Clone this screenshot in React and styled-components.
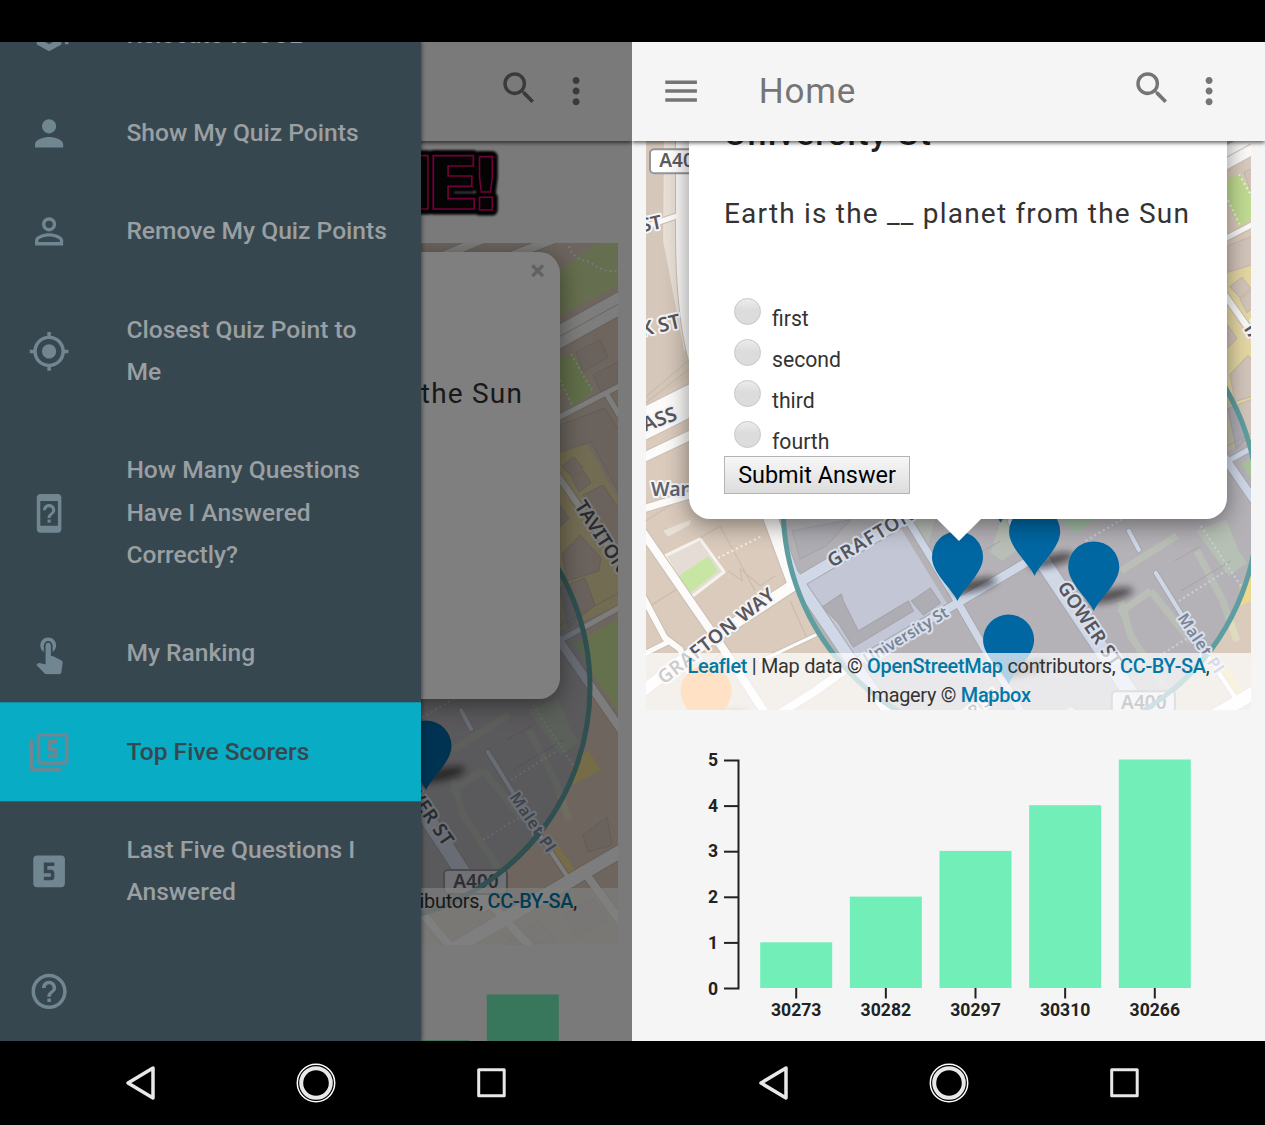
import React from "react";
import styled, { createGlobalStyle, css } from "styled-components";
import {
  MdSchool, MdPerson, MdPersonOutline, MdMyLocation, MdDeviceUnknown, MdTouchApp,
  MdFilter5, MdLooks5, MdHelpOutline, MdSearch, MdMoreVert, MdMenu,
} from "react-icons/md";

const Global = createGlobalStyle`
  * { box-sizing: border-box; }
  body { margin: 0; background: #000; font-family: Roboto, "Liberation Sans", sans-serif; }
`;

const Page = styled.main`
  width: 1265px;
  height: 1125px;
  padding-top: 42px;
  display: grid;
  grid-template-columns: 632px 633px;
  background: #000;
  overflow: hidden;
`;
const Phone = styled.section`
  display: flex;
  flex-direction: column;
  min-width: 0;
`;
const Screen = styled.div`
  position: relative;
  height: 999px;
  background: #f5f5f5;
  overflow: hidden;
  display: flex;
  flex-direction: column;
`;
const AppBar = styled.header`
  position: relative;
  z-index: 2;
  flex: none;
  height: 99px;
  padding: 0 35px 0 28px;
  display: flex;
  align-items: center;
  color: #757575;
  background: #f5f5f5;
  box-shadow: 0 2px 4px rgba(0, 0, 0, 0.6);
  svg { display: block; width: 42.2px; height: 42.2px; }
`;
const Title = styled.h1`
  flex: 1;
  margin: 0 0 0 56.5px;
  font-size: 35px;
  font-weight: 400;
  letter-spacing: 0.8px;
`;
const SearchButton = styled.span`
  margin: 0 14.8px 7px 0;
`;
const Body = styled.div`
  flex: none;
  display: flex;
  flex-direction: column;
  transform: translateY(${(p) => -p.$scrolled}px);
`;
const Banner = styled.div`
  height: 102px;
  display: flex;
  justify-content: flex-end;
  svg { margin-right: 113px; display: block; }
`;
const MapFrame = styled.div`
  position: relative;
  height: 702px;
  margin: 0 14px;
  overflow: hidden;
  & > svg { display: block; width: 100%; height: 100%; }
`;
const Attribution = styled.div`
  position: absolute;
  left: 0;
  right: 0;
  bottom: 0;
  height: 57px;
  background: rgba(255, 255, 255, 0.7);
  color: #333;
  font-size: 19.9px;
  letter-spacing: -0.28px;
  line-height: 28.5px;
  text-align: center;
  white-space: nowrap;
  b { color: #0078a8; font-weight: 500; }
`;
const PopupBox = styled.div`
  position: absolute;
  left: ${(p) => 8 + p.$pan[0]}px;
  top: ${(p) => 9 + p.$pan[1]}px;
  width: 538px;
  height: 447px;
  padding: 41px 35px 0;
  border-radius: 21px;
  background: #fff;
  color: #333;
  box-shadow: 0 5px 25px rgba(0, 0, 0, 0.45);
  &::after {
    content: "";
    position: absolute;
    left: 247px;
    top: 446px;
    border: 23px solid transparent;
    border-top-color: #fff;
    border-bottom: 0;
  }
`;
const Close = styled.span`
  position: absolute;
  right: 15px;
  top: 4px;
  font: bold 28px/30px Roboto, sans-serif;
  color: #c3c3c3;
`;
const PopupTitle = styled.h3`
  margin: 0;
  font-size: 34px;
  line-height: 40px;
  font-weight: 500;
  letter-spacing: 1.3px;
  color: #222;
`;
const Question = styled.p`
  margin: 41px 0 57px;
  font-size: 28px;
  line-height: 40px;
  letter-spacing: 1.2px;
  white-space: nowrap;
`;
const Choice = styled.label`
  height: 41px;
  padding-left: 9.5px;
  display: flex;
  align-items: center;
  gap: 11.5px;
  font-size: 21.2px;
`;
const Dot = styled.i`
  width: 27px;
  height: 27px;
  border: 1px solid #c6c6c6;
  border-radius: 50%;
  background: linear-gradient(#ececec, #dcdcdc 45%);
`;
const ChoiceText = styled.span`
  padding-top: 13.4px;
`;
const Submit = styled.button`
  display: block;
  width: 186px;
  height: 38px;
  margin: 1px 0 0;
  padding: 0;
  border: 1px solid #b4b4b4;
  background: linear-gradient(#f7f7f7, #dcdcdc);
  color: #000;
  font: 400 23.4px Roboto, sans-serif;
  white-space: nowrap;
`;
const ChartBox = styled.div`
  height: 331px;
  svg { display: block; }
  text { font: 700 17.6px Roboto, sans-serif; fill: #222; }
`;
const Scrim = styled.div`
  position: absolute;
  inset: 0;
  z-index: 3;
  background: rgba(0, 0, 0, 0.5);
`;
const Drawer = styled.nav`
  position: absolute;
  z-index: 4;
  left: 0;
  top: 0;
  width: 421px;
  height: 100%;
  overflow: hidden;
  background: #37474f;
  box-shadow: 1px 0 4px rgba(0, 0, 0, 0.45);
`;
const DrawerList = styled.div`
  display: flex;
  flex-direction: column;
  transform: translateY(-56.7px);
`;
const Item = styled.a`
  display: flex;
  align-items: center;
  gap: 56.2px;
  padding: 28.2px 26px 28.2px 28px;
  min-height: 98.4px;
  font-size: 24.6px;
  font-weight: 500;
  line-height: 42.1px;
  color: #999fa2;
  svg { flex: none; width: 42.2px; height: 42.2px; color: #708691; }
  &:first-child { padding-top: 28.6px; padding-bottom: 27.8px; }
  ${(p) => p.$active && css`
    background: #08acc4;
    color: #37474f;
    svg { color: #738590; }
  `}
`;
const NavBar = styled.footer`
  height: 84px;
  display: flex;
  justify-content: center;
  align-items: center;
  svg { display: block; }
`;

const MENU = [
  [MdSchool, "Relocate to UCL"],
  [MdPerson, "Show My Quiz Points"],
  [MdPersonOutline, "Remove My Quiz Points"],
  [MdMyLocation, "Closest Quiz Point to Me"],
  [MdDeviceUnknown, "How Many Questions Have I Answered Correctly?"],
  [MdTouchApp, "My Ranking"],
  [MdFilter5, "Top Five Scorers", true],
  [MdLooks5, "Last Five Questions I Answered"],
  [MdHelpOutline, ""],
];

const SCORES = [["30273", 1], ["30282", 2], ["30297", 3], ["30310", 4], ["30266", 5]];

function Pin({ x, y, color = "#0067a3" }) {
  return (
    <g transform={`translate(${x} ${y})`}>
      <ellipse cx="20" cy="-11" rx="23" ry="6" transform="rotate(-14)" fill="#111" opacity=".6" filter="url(#soft)" />
      <path d="M0 0 C-6 -13 -25.500 -28 -25.500 -44 A25.500 25.500 0 0 1 25.500 -44 C25.500 -28 6 -13 0 0Z" fill={color} />
    </g>
  );
}

const ROADS = [
  ["M684 120 L684 240 Q685 330 702 375", 16],
  ["M646 226 L690 211", 5],
  ["M630 430 L700 395", 30],
  ["M630 463 L700 430", 9],
  ["M630 512 L720 485", 7],
  ["M635 520 L728 655 L765 712", 8],
  ["M640 590 L665 637 L680 648 L705 712", 6],
  ["M640 655 L668 641", 5],
  ["M630 700 L700 645 L795 583 L905 518 L960 480", 11],
  ["M764 500 L794 582", 14],
  ["M794 575 L850 658 L895 720", 11],
  ["M780 712 L815 690 L850 665 L1035 556", 8],
  ["M760 660 L815 634", 3],
  ["M896 500 L952 592 L1020 710", 7],
  ["M1015 520 L1055 580 L1112 665 L1150 724", 15],
  ["M1128 530 L1138 549 M1155 572 L1200 645 L1240 705", 4],
  ["M1100 80 L1160 55 M1180 75 L1245 50", 8],
  ["M1215 163 L1300 116", 21],
  ["M1215 243 L1300 199 M1273 213 L1295 250", 5],
  ["M1215 282 L1295 395", 6],
  ["M1205 430 L1300 567", 8],
  ["M1215 467 L1300 420", 5],
  ["M1110 775 L1300 664", 13],
  ["M1145 710 L1200 770 M1250 690 L1290 745 M1070 710 L1120 770", 8],
];

/* Building outlines lying on the lighter street ground */
const BLOCKS = [
  "822 606 L841 593 L843 600 L858 630 L908 600 L913 610 L853 646 L838 622Z",
  "911 600 L930 587 L940 602 L923 614Z",
  "792 530 L850 519 L826 545 L800 558Z",
  "1243 172 L1267 160 L1275 177 L1250 192Z",
  "1260 195 L1285 182 L1285 210 L1268 212Z",
  "1227 245 L1272 228 L1290 258 L1290 320 L1258 262 L1227 272Z",
  "1229 286 L1241 277 L1250 288 L1239 297Z",
  "1239 299 L1250 290 L1258 303 L1246 312Z",
  "1250 315 L1270 305 L1300 350 L1285 365Z",
  "1227 325 L1236 338 L1227 347Z",
  "1229 374 L1247 355 L1268 378 L1266 391 L1234 401Z",
  "1227 408 L1252 398 L1262 425 L1235 448Z",
  "1250 655 L1274 637 L1279 665 L1255 672Z",
  "1230 735 L1260 718 L1275 740 L1245 758Z",
  "1170 766 L1205 740 L1225 762Z",
];

function MapArt({ origin }) {
  return (
    <svg viewBox={`${origin[0]} ${origin[1]} 604 702`} preserveAspectRatio="xMinYMin slice">
      <defs>
        <filter id="soft" x="-50%" y="-100%" width="200%" height="300%"><feGaussianBlur stdDeviation="3.500" /></filter>
      </defs>
      <rect x="600" y="0" width="720" height="800" fill="#dacbbd" />
      <path d="M646 100 H676 L680 310 L690 350 V375 L646 405Z" fill="#d5c7b9" />
      <path d="M664 141 L663 240 L684 350 L690 350 L676 240 L675 141Z" fill="#e8dfd6" />
      <path d="M803 583 L900 527 L948 605 L853 660Z" fill="#ece4e2" />
      <path d="M1227 270 L1252 260 L1300 345 L1300 420 L1227 450Z" fill="#e5d8a5" />
      <path d="M1238 585 L1255 570 L1268 590 L1240 605Z M1213 668 L1222 660 L1242 690 L1236 697Z" fill="#ecd88e" />
      <path d="M905 515 L935 515 L926 550Z M1000 519 L1030 519 L1024 543 L1002 560 L990 552Z" fill="#dfdbbd" />
      <path d="M1195 530 L1225 519 L1238 550 L1246 562 L1228 575Z" fill="#dbdcb9" />
      <path d="M1118 612 L1150 590 M1120 600 L1130 635 L1165 688 M1150 590 L1190 640 M1196 550 L1222 600 L1236 640 M1120 570 L1176 535" fill="none" stroke="#dfdbbd" strokeWidth="7" />
      <path d="M1215 100 L1268 60 H1300 V98 L1215 142Z" fill="#cbdd9d" />
      <path d="M1227 178 L1240 174 L1261 210 L1239 227 L1222 195Z" fill="#c2dc93" />
      <path d="M1240 463 L1300 432 V555Z" fill="#cbe09b" />
      <path d="M1060 519 H1094 L1075 533Z" fill="#c2dba8" />
      {BLOCKS.map((d) => <path key={d} d={`M${d}`} fill="#d3c5ba" stroke="#c6b8ab" strokeWidth="1" />)}
      <path d="M665 555 L700 538 L724 571 L690 597Z" fill="#e5ddd5" stroke="#f6f2ed" strokeWidth="3" strokeLinejoin="round" />
      <path d="M676 577 L708 555 L718 570 L690 592Z" fill="#c8e6a3" />
      <path d="M663 530 L685 521 L691 519 L690 524 L668 536Z" fill="#e8dfd5" />
      <g fill="none" stroke="#c9baab" strokeWidth="1">
        <path d="M646 520 L680 498 M700 537 L720 525 L755 590 M728 570 L742 580 L740 568 L760 585 L775 575 M650 605 L682 585 M700 640 L735 618 M790 600 L808 640 M694 670 L720 654 M646 396 L700 350 M646 402 L700 360" />
        <path d="M1222 160 L1300 116 M1227 445 L1300 405 M1180 590 L1230 560 M1110 720 L1180 760 M966 560 L1000 540 M1174 560 L1200 545" />
      </g>
      <g fill="none" stroke="#c9bfb5" strokeLinecap="round" strokeLinejoin="round">
        {ROADS.map(([d, w]) => <path key={d} d={d} strokeWidth={w + 2} />)}
      </g>
      <g fill="none" stroke="#fcfbfa" strokeLinecap="round" strokeLinejoin="round">
        {ROADS.map(([d, w]) => <path key={d} d={d} strokeWidth={w} />)}
      </g>
      <path d="M1215 163 L1300 116" stroke="#cfc9c3" strokeWidth="1" />
      <g fill="none" stroke="#f4f0ea" strokeWidth="2" strokeDasharray="2 3">
        <path d="M718 557 L762 535 M1085 540 L1127 515 M1178 600 L1225 570 M1150 660 L1190 635 M1200 525 L1240 585 M1236 66 Q1240 80 1257 82 Q1270 93 1285 91 M1238 174 L1260 212 M1227 200 L1240 227" />
      </g>
      <circle cx="1020" cy="507" r="237" fill="rgba(35,80,160,.2)" stroke="#5f9ea0" strokeWidth="5" />
      <g fontFamily="Noto Sans, sans-serif" fontWeight="600" fontSize="19" fill="#56565c" stroke="#f6f4f4" strokeWidth="4" strokeLinejoin="round" paintOrder="stroke">
        <text transform="translate(642 232) rotate(-12)" fontSize="19">ST</text>
        <text transform="translate(642 336) rotate(-13)" fontSize="20">K ST</text>
        <text transform="translate(645 431) rotate(-20)" fontSize="20">ASS</text>
        <text x="651" y="495" fontSize="19.500" fill="#60636e">Warren</text>
        <text transform="translate(664 684) rotate(-38)" textLength="142">GRAFTON WAY</text>
        <text transform="translate(832 567) rotate(-31)" textLength="97" stroke="#d8e0ed">GRAFTON</text>
        <text transform="translate(867 664) rotate(-31)" fontSize="16" textLength="96" fill="#7c8294" stroke="#d8e0ed">University St</text>
        <text transform="translate(1056 586) rotate(56)" textLength="98" stroke="#d8e0ed">GOWER ST</text>
        <text transform="translate(1176 617) rotate(56)" fontSize="16" textLength="68" fill="#7d8497" stroke="#d8e0ed">Malet Pl</text>
        <text transform="translate(1241 326) rotate(57)">TAVITON ST</text>
        <text transform="translate(966 722) rotate(-38)" fontSize="16">ER ST</text>
      </g>
      {[[650, 149], [1111, 690]].map(([x, y]) => (
        <g key={x}>
          <rect x={x} y={y} width="63" height="24" rx="4" fill={x < 700 ? "#fff" : "#dfe3ec"} stroke="#96959a" strokeWidth="2" />
          <text x={x + 32} y={y + 18} textAnchor="middle" fontFamily="Noto Sans, sans-serif" fontWeight="600" fontSize="19" fill="#5d5c60">A400</text>
        </g>
      ))}
      <path d="M1206 653 A237 237 0 0 1 1100 730" fill="none" stroke="#5f9ea0" strokeWidth="5" />
      <Pin x={1000} y={522} />
      <Pin x={1034} y={575} />
      <Pin x={957} y={600} />
      <Pin x={1093} y={610} />
      <Pin x={1008} y={683} />
      <Pin x={706} y={734} color="#ff9a3c" />
    </svg>
  );
}

const LOGO_LETTERS = (
  <>
    <text x="43" y="68">M</text>
    <text x="107" y="68" textLength="54" lengthAdjust="spacingAndGlyphs">E</text>
    <text x="167" y="69" textAnchor="middle">!</text>
  </>
);

function LogoArt() {
  return (
    <svg width="200" height="86" viewBox="0 0 200 86" fontFamily="DejaVu Sans, sans-serif" fontWeight="700" fontSize="73">
      <defs><filter id="glow"><feGaussianBlur stdDeviation="1" /></filter></defs>
      <g stroke="#000" strokeWidth="11" strokeLinejoin="round" filter="url(#glow)">{LOGO_LETTERS}</g>
      <g fill="#090909" stroke="#e60070" strokeWidth="1.600">{LOGO_LETTERS}</g>
    </svg>
  );
}

function ScoreChart() {
  return (
    <ChartBox>
      <svg width="633" height="331" viewBox="0 0 633 331">
        <path d="M92 50.500 H106.500 V278.500 H92" fill="none" stroke="#222" strokeWidth="2" />
        {[0, 1, 2, 3, 4, 5].map((n) => (
          <g key={n}>
            {n > 0 && n < 5 && <path d={`M92 ${278.5 - n * 45.6} H106`} stroke="#222" strokeWidth="2" />}
            <text x="86" y={284.5 - n * 45.7} textAnchor="end">{n}</text>
          </g>
        ))}
        {SCORES.map(([id, value], i) => (
          <g key={id} transform={`translate(${128.2 + i * 89.65} 0)`}>
            <rect y={278 - value * 45.7} width="72" height={value * 45.7} fill="#72efb9" />
            <path d="M36 278 V288.500" stroke="#222" strokeWidth="2" />
            <text x="36" y="306" textAnchor="middle">{id}</text>
          </g>
        ))}
      </svg>
    </ChartBox>
  );
}

function Home({ title, scrolled, pan, origin }) {
  return (
    <>
      <AppBar>
        <MdMenu />
        <Title>{title}</Title>
        <SearchButton><MdSearch /></SearchButton>
        <MdMoreVert />
      </AppBar>
      <Body $scrolled={scrolled}>
        <Banner><LogoArt /></Banner>
        <MapFrame>
          <MapArt origin={origin} />
          <PopupBox $pan={pan}>
            <Close>×</Close>
            <PopupTitle>University St</PopupTitle>
            <Question>Earth is the __ planet from the Sun</Question>
            {["first", "second", "third", "fourth"].map((c) => (
              <Choice key={c}><Dot /><ChoiceText>{c}</ChoiceText></Choice>
            ))}
            <Submit>Submit Answer</Submit>
          </PopupBox>
          <Attribution>
            <b>Leaflet</b> | Map data © <b>OpenStreetMap</b> contributors, <b>CC-BY-SA</b>,<br />
            Imagery © <b>Mapbox</b>
          </Attribution>
        </MapFrame>
        <ScoreChart />
      </Body>
    </>
  );
}

function SystemNav() {
  return (
    <NavBar>
      <svg width="632" height="84" viewBox="0 0 632 84" fill="none" stroke="#e8e8e8" strokeLinejoin="round">
        <path d="M128 42 L153 27 V57Z" strokeWidth="3.500" />
        <circle cx="316" cy="42" r="18.700" strokeWidth="1.500" stroke="#fff" />
        <circle cx="316" cy="42" r="14.800" strokeWidth="4" />
        <rect x="478.700" y="28.800" width="25.500" height="26" strokeWidth="3" />
      </svg>
    </NavBar>
  );
}

export default function App() {
  return (
    <>
      <Global />
      <Page>
        <Phone>
          <Screen>
            <Home title="" scrolled={0} pan={[0, 0]} origin={[681, 63]} />
            <Scrim />
            <Drawer>
              <DrawerList>
                {MENU.map(([Icon, label, active]) => (
                  <Item key={label} $active={active}><Icon /><span>{label}</span></Item>
                ))}
              </DrawerList>
            </Drawer>
          </Screen>
          <SystemNav />
        </Phone>
        <Phone>
          <Screen>
            <Home title="Home" scrolled={235} pan={[35, 55]} origin={[646, 8]} />
          </Screen>
          <SystemNav />
        </Phone>
      </Page>
    </>
  );
}
